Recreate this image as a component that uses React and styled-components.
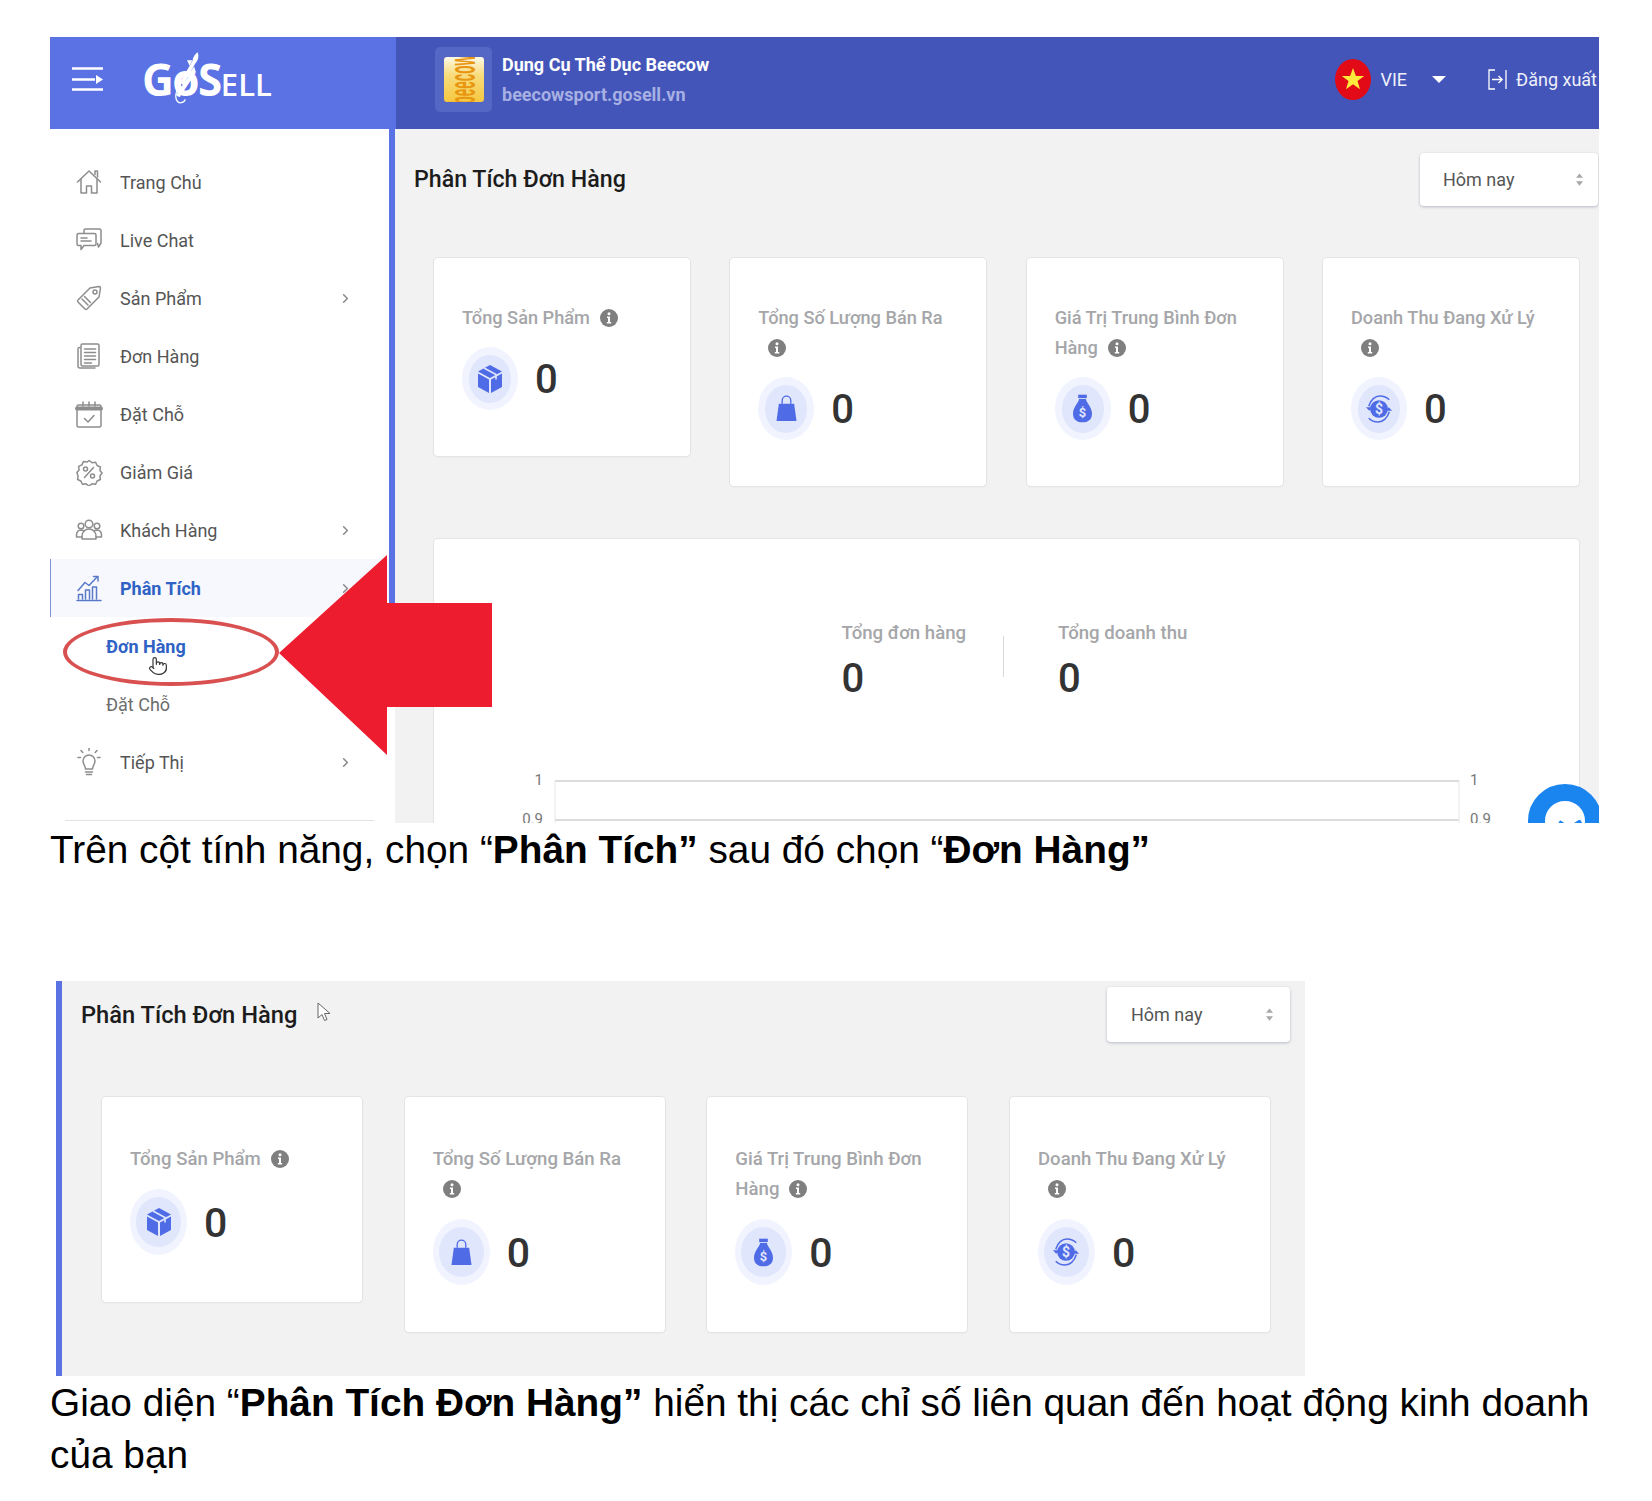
import React from "react";
import styled, { createGlobalStyle } from "styled-components";
import { ChevronRight, Pointer } from "lucide-react";

const Global = createGlobalStyle`
  html, body { margin: 0; padding: 0; background: #fff; }
  body { font-family: Roboto, "Noto Sans", sans-serif; }
`;

const Page = styled.div`
  width: 1549px;
  padding: 37px 0 0 50px;
`;

const ShotOne = styled.section`
  position: relative;
  width: 1549px;
  height: 786px;
  overflow: hidden;
`;

const Header = styled.header`
  display: flex;
  height: 92px;
  background: #4355b9;
  color: #fff;
`;

const Brand = styled.div`
  width: 346px;
  display: flex;
  align-items: center;
  gap: 39px;
  padding: 0 0 8px 22px;
  box-sizing: border-box;
  background: #5a72e4;
`;

const BrandName = styled.div`
  position: relative;
  font-family: "Open Sans", Roboto, sans-serif;
  font-weight: 700;
  font-size: 44px;
  line-height: 1;
  letter-spacing: -1.5px;
  display: flex;
  align-items: baseline;
`;

const BrandSmall = styled.span`
  font-size: 31px;
  font-weight: 600;
  letter-spacing: 0;
`;

const Rocket = styled.svg`
  position: absolute;
  left: 29px;
  top: -6px;
`;

const Shop = styled.div`
  display: flex;
  align-items: center;
  gap: 10px;
  margin-left: 39px;
  padding-bottom: 7px;
`;

const ShopThumb = styled.div`
  width: 57px;
  height: 65px;
  border-radius: 5px;
  background: #5567c5;
  display: flex;
  align-items: center;
  justify-content: center;
`;

const ShopLogo = styled.div`
  width: 40px;
  height: 45px;
  border-radius: 3px;
  overflow: hidden;
  display: flex;
  align-items: center;
  justify-content: center;
  background: linear-gradient(180deg, #fdf9e6 0%, #f8dc7c 40%, #f6c740 100%);
`;

const ShopLogoText = styled.span`
  color: #e8960f;
  font-family: "Liberation Sans", sans-serif;
  font-weight: 700;
  font-size: 13.5px;
  line-height: 16px;
  writing-mode: vertical-rl;
  transform: rotate(180deg) scaleX(2.7);
  white-space: nowrap;
`;

const ShopText = styled.div`
  display: flex;
  flex-direction: column;
  gap: 8px;
`;

const ShopName = styled.div`
  font-size: 18px;
  font-weight: 700;
  line-height: 22px;
`;

const ShopUrl = styled.div`
  font-size: 18px;
  font-weight: 700;
  line-height: 22px;
  color: #a7b0e3;
`;

const HeaderRight = styled.div`
  margin-left: auto;
  display: flex;
  align-items: center;
  font-size: 18px;
  color: #eef0fb;
  white-space: nowrap;
  padding: 0 2px 8px 0;
`;

const Flag = styled.svg`
  margin-right: 9px;
`;

const Caret = styled.span`
  width: 0;
  height: 0;
  margin: 0 42px 0 25px;
  border-left: 7px solid transparent;
  border-right: 7px solid transparent;
  border-top: 7px solid #fff;
`;

const LogoutIcon = styled.svg`
  margin-right: 9px;
`;

const Body = styled.div`
  display: flex;
  height: 694px;
`;

const Sidebar = styled.nav`
  position: relative;
  width: 345px;
  box-sizing: border-box;
  flex: none;
  padding: 24px 6px 0 0;
  background: #fff;

  &::after {
    content: "";
    position: absolute;
    top: 0;
    right: 0;
    width: 6px;
    height: 530px;
    background: #5a72e4;
  }
`;

const NavRow = styled.div`
  height: 58px;
  display: flex;
  align-items: center;
  gap: 17px;
  box-sizing: border-box;
  padding: 0 36px 0 25px;
  font-size: 18px;
  color: ${(p) => (p.$active ? "#2f62c4" : "#555")};
  font-weight: ${(p) => (p.$active ? 700 : 400)};
  background: ${(p) => (p.$active ? "#f6f8fd" : "transparent")};
  box-shadow: ${(p) => (p.$active ? "inset 1px 0 0 #7d93d8" : "none")};
`;

const NavIcon = styled.svg`
  flex: none;
  color: ${(p) => (p.$active ? "#5a78c8" : "#8d8d8d")};
`;

const NavChevron = styled(ChevronRight)`
  margin-left: auto;
  color: #8a8a8a;
`;

const SubRow = styled.div`
  height: 58px;
  display: flex;
  align-items: center;
  padding-left: 56px;
  font-size: 18px;
  color: ${(p) => (p.$active ? "#2f62c4" : "#6d6d6d")};
  font-weight: ${(p) => (p.$active ? 700 : 400)};
`;

const NavDivider = styled.div`
  height: 1px;
  margin: 29px 15px 0 15px;
  background: #e2e2e2;
`;

const Content = styled.main`
  flex: 1;
  min-width: 0;
  box-sizing: border-box;
  padding: 24px 1px 0 19px;
  background: #f2f2f2;
`;

const TitleRow = styled.div`
  display: flex;
  align-items: center;
  justify-content: space-between;
  height: ${(p) => (p.$large ? "55px" : "53px")};
`;

const PageTitle = styled.h2`
  margin: 0;
  padding-bottom: ${(p) => (p.$large ? "0" : "2px")};
  font-size: ${(p) => (p.$large ? "23.7px" : "23.2px")};
  font-weight: 500;
  color: #1c1c1c;
  display: flex;
  align-items: center;
`;

const Select = styled.div`
  width: ${(p) => (p.$large ? "183px" : "178px")};
  height: ${(p) => (p.$large ? "55px" : "53px")};
  box-sizing: border-box;
  padding: 0 ${(p) => (p.$large ? "17px" : "15px")} 0 ${(p) => (p.$large ? "24px" : "23px")};
  display: flex;
  align-items: center;
  justify-content: space-between;
  background: #fff;
  border-radius: 4px;
  box-shadow: 0 1px 3px rgba(70, 80, 120, 0.35);
  font-size: 18px;
  color: #555;
`;

const Cards = styled.div`
  display: grid;
  grid-template-columns: repeat(4, ${(p) => (p.$large ? "260px" : "256px")});
  justify-content: space-between;
  align-items: start;
  margin-top: ${(p) => (p.$large ? "55px" : "52px")};
  padding: ${(p) => (p.$large ? "0 20px 0 21px" : "0 19px 0 20px")};
`;

const Card = styled.article`
  box-sizing: border-box;
  padding: ${(p) => (p.$large ? "47px 28px" : "45px 28px 46px")};
  background: #fff;
  border-radius: 4px;
  box-shadow: 0 0 0 1px #e4e4e4, 0 1px 2px rgba(0, 0, 0, 0.08);
`;

const CardTitle = styled.div`
  font-size: ${(p) => (p.$large ? "18.6px" : "18.2px")};
  font-weight: 500;
  line-height: 30px;
  color: #a5a6a9;
`;

const InfoIcon = styled.svg`
  display: inline-block;
  vertical-align: -3px;
  margin-left: 10px;
`;

const CardValue = styled.div`
  display: flex;
  align-items: center;
  gap: 17px;
  margin-top: ${(p) => (p.$large ? "15px" : "14px")};
`;

const Halo = styled.div`
  width: ${(p) => (p.$large ? "57px" : "56px")};
  height: ${(p) => (p.$large ? "66px" : "63px")};
  border-radius: 50%;
  background: #f1f4fe;
  display: flex;
  align-items: center;
  justify-content: center;
`;

const HaloInner = styled.div`
  width: ${(p) => (p.$large ? "45px" : "42px")};
  height: ${(p) => (p.$large ? "50px" : "48px")};
  border-radius: 50%;
  background: #e0e6fb;
  display: flex;
  align-items: center;
  justify-content: center;
`;

const Num = styled.div`
  font-size: ${(p) => (p.$large ? "41px" : "40px")};
  font-weight: 500;
  line-height: 1;
  color: #333;
  padding-top: 3px;
`;

const ChartCard = styled.article`
  margin: 53px 19px 0 20px;
  height: 400px;
  box-sizing: border-box;
  padding-top: 79px;
  background: #fff;
  border-radius: 4px;
  box-shadow: 0 0 0 1px #e4e4e4, 0 1px 2px rgba(0, 0, 0, 0.08);
`;

const Summary = styled.div`
  display: flex;
  justify-content: center;
  padding-left: 16px;
`;

const SummaryCell = styled.div`
  display: flex;
  flex-direction: column;
  gap: 8px;
  padding: ${(p) => (p.$first ? "0 37px 0 0" : "0 0 0 54px")};
`;

const SummaryLabel = styled.div`
  font-size: 18.6px;
  font-weight: 500;
  line-height: 30px;
  color: #a5a6a9;
`;

const SummaryRule = styled.div`
  width: 1px;
  height: 41px;
  margin-top: 18px;
  background: #d8d8d8;
`;

const ChartSvg = styled.svg`
  display: block;
  margin-top: 72px;
`;

const Arrow = styled.svg`
  position: absolute;
  left: 229px;
  top: 518px;
`;

const Ring = styled.div`
  position: absolute;
  left: 13px;
  top: 581px;
  width: 216px;
  height: 68px;
  box-sizing: border-box;
  border: 4px solid #d95050;
  border-radius: 50%;
`;

const Hand = styled(Pointer)`
  position: absolute;
  left: 98px;
  top: 619px;
  color: #333;
  fill: #fff;
`;

const Messenger = styled.div`
  position: absolute;
  left: 1478px;
  top: 747px;
  width: 74px;
  height: 74px;
  box-sizing: border-box;
  border: 17px solid #1a84ef;
  border-radius: 50%;
  background: #fff;
`;

const MessengerMark = styled.svg`
  position: absolute;
  left: 12px;
  top: 19px;
`;

const Caption = styled.p`
  margin: 0;
  padding-top: 1px;
  font-family: "Liberation Sans", Arial, sans-serif;
  font-size: 38.8px;
  line-height: 52px;
  color: #000;
`;

const ShotTwo = styled.section`
  width: 1249px;
  height: 395px;
  margin: 105px 0 0 6px;
  box-sizing: border-box;
  padding: 6px 15px 0 19px;
  background: #f2f2f2;
  border-left: 6px solid #5a72e4;
`;

const ArrowCursor = styled.svg`
  margin: -6px 0 0 20px;
`;

const I = {
  home: (
    <>
      <path d="M2.500 14 14 3l11.500 11" />
      <path d="M20 6.500V3h2.500v6" />
      <path d="M6 11.500V25h5.500v-7h5v7H22V11.500" />
    </>
  ),
  chat: (
    <>
      <path d="M9 7V4.500A1.500 1.500 0 0 1 10.500 3h14A1.500 1.500 0 0 1 26 4.500V17l-2.500 4-1-3.500" />
      <path d="M3.500 7.500h16A1.500 1.500 0 0 1 21 9v9a1.500 1.500 0 0 1-1.500 1.500H9L6 23.500v-4H3.500A1.500 1.500 0 0 1 2 18V9a1.500 1.500 0 0 1 1.500-1.500Z" />
      <path d="M6 12h6M6 15h10" />
    </>
  ),
  tag: (
    <>
      <path d="M3 16 15 4l9-1.500c.8 0 1.500.7 1.500 1.500L24 13 12 25a1.500 1.500 0 0 1-2 0l-7-7a1.500 1.500 0 0 1 0-2Z" />
      <circle cx="20" cy="8" r="2" />
      <path d="m7 15 6 6M9.500 12.500l6 6" />
    </>
  ),
  orders: (
    <>
      <path d="M5 5.500h-.5A1.500 1.500 0 0 0 3 7v17a2 2 0 0 0 2 2h15" />
      <rect x="6" y="2" width="18" height="22" rx="1.500" />
      <path d="M9.500 7h11M9.500 10.500h11M9.500 14h11M9.500 17.500h11M9.500 21h7" />
    </>
  ),
  calendar: (
    <>
      <rect x="2" y="5" width="24" height="22" rx="1.500" />
      <path d="M2 8.500h24" strokeWidth="4" />
      <path d="M8 2v4M14 2v4M20 2v4" />
      <path d="m9.500 18.500 3.500 3.500 6-6.500" />
    </>
  ),
  percent: (
    <>
      <path d="M14 2.500l3 2.200 3.600-.5 1.500 3.300 3.300 1.500-.5 3.600 2.200 2.400-2.200 2.900.5 3.600-3.300 1.500-1.500 3.300-3.600-.5-3 2.200-3-2.200-3.600.5-1.500-3.300-3.300-1.500.5-3.600L1.900 14.500 4.100 12l-.5-3.600 3.300-1.500 1.500-3.300 3.600.5Z" />
      <circle cx="10.500" cy="11" r="2" />
      <circle cx="17.500" cy="18" r="2" />
      <path d="m18.500 9.500-9 10" />
    </>
  ),
  users: (
    <>
      <circle cx="14" cy="8" r="3.800" />
      <circle cx="6" cy="10" r="2.800" />
      <circle cx="22" cy="10" r="2.800" />
      <path d="M7 23v-3a7 7 0 0 1 14 0v3Z" />
      <path d="M7 21H1.500v-2.500A5 5 0 0 1 6 14c1.300 0 2.300.3 3 1M21 21h5.500v-2.500A5 5 0 0 0 22 14c-1.300 0-2.300.3-3 1" />
    </>
  ),
  chart: (
    <>
      <path d="M2 26.500h24" />
      <path d="M3.500 25v-4.500h4V25M10.500 25v-9h4v9M17.500 25V13h4v12" />
      <path d="M3 16.500 10 8.500l4 3 8-8.500" />
      <path d="M18.500 2.500h4.500V7" />
    </>
  ),
  bulb: (
    <>
      <path d="M10.500 20c0-3-2.500-5-2.500-8a6 6 0 0 1 12 0c0 3-2.500 5-2.500 8Z" transform="translate(0 1)" />
      <path d="M10.500 24h7M11.500 26.500h5" />
      <path d="M14 0v2.500M6 2.500l1.800 2M22 2.500l-1.800 2M3 9.500h2.500M25 9.500h-2.500" />
    </>
  ),
};

function NavGlyph({ name, active }) {
  return (
    <NavIcon $active={active} width="28" height="28" viewBox="0 0 28 28" fill="none" stroke="currentColor" strokeWidth="1.500" strokeLinejoin="round" strokeLinecap="round">
      {I[name]}
    </NavIcon>
  );
}

function Info() {
  return (
    <InfoIcon width="18" height="18" viewBox="0 0 18 18">
      <circle cx="9" cy="9" r="9" fill="#7f7f7f" />
      <circle cx="9" cy="4.800" r="1.500" fill="#fff" />
      <path d="M7 7.500h3v5.500h1.200v1.500H6.800V13H8V9H7Z" fill="#fff" />
    </InfoIcon>
  );
}

function UpDown() {
  return (
    <svg width="7" height="13" viewBox="0 0 8 14" fill="#a8a8a8">
      <path d="M4 0 8 5H0ZM4 14 0 9h8Z" />
    </svg>
  );
}

const BLUE = "#4f6be6";

const stat = {
  box: (
    <svg width="26" height="30" viewBox="0 0 26 30">
      <path d="M13 1 25 7.500 13 14 1 7.500Z" fill={BLUE} />
      <path d="M1 9.500 12 15.500V29L1 23Z" fill={BLUE} />
      <path d="M25 9.500 14 15.500V29l11-6Z" fill={BLUE} />
      <path d="m7 4 12 6.500v5" stroke="#e0e6fb" strokeWidth="1.600" fill="none" />
    </svg>
  ),
  bag: (
    <svg width="21" height="31" viewBox="0 0 22 30">
      <path d="M6.500 10V6.500a4.500 4.500 0 0 1 9 0V10" fill="none" stroke={BLUE} strokeWidth="1.400" />
      <path d="M3 10h16l2.500 18H.5Z" fill={BLUE} />
    </svg>
  ),
  money: (
    <svg width="19" height="33" viewBox="0 0 22 34">
      <rect x="6" y="1" width="10" height="4" fill={BLUE} />
      <path d="M7 6h8c0 4 7 9 7 17 0 7-5 10-11 10S0 30 0 23C0 15 7 10 7 6Z" fill={BLUE} />
      <text x="11" y="27" textAnchor="middle" fontFamily="Roboto, sans-serif" fontSize="15" fontWeight="700" fill="#e0e6fb">$</text>
    </svg>
  ),
  cycle: (
    <svg width="28" height="34" viewBox="0 0 30 34">
      <circle cx="15" cy="17" r="9.500" fill={BLUE} />
      <text x="15" y="22.500" textAnchor="middle" fontFamily="Roboto, sans-serif" fontSize="15" fontWeight="700" fill="#e0e6fb">$</text>
      <path d="M4 14C6 7 11 3 16 3s8 2 10 4M26 20c-2 7-7 11-12 11s-8-2-10-4" fill="none" stroke={BLUE} strokeWidth="1.600" />
      <path d="M1 15h7l-3.500 4ZM22 19h7l-3.500-4Z" fill={BLUE} />
    </svg>
  ),
};

const cardData = [
  { title: "Tổng Sản Phẩm", icon: "box" },
  { title: "Tổng Số Lượng Bán Ra", icon: "bag" },
  { title: "Giá Trị Trung Bình Đơn Hàng", icon: "money" },
  { title: "Doanh Thu Đang Xử Lý", icon: "cycle" },
];

function StatCards({ large }) {
  return (
    <Cards $large={large}>
      {cardData.map((c) => (
        <Card key={c.title} $large={large}>
          <CardTitle $large={large}>
            {c.title}
            <wbr />
            <Info />
          </CardTitle>
          <CardValue $large={large}>
            <Halo $large={large}>
              <HaloInner $large={large}>{stat[c.icon]}</HaloInner>
            </Halo>
            <Num $large={large}>0</Num>
          </CardValue>
        </Card>
      ))}
    </Cards>
  );
}

function Chart() {
  const text = { fontFamily: "Roboto, sans-serif", fontSize: 15, fill: "#777" };
  return (
    <ChartSvg width="1146" height="70" viewBox="0 0 1146 70">
      <path d="M121 10h904M121 49h904" stroke="#dcdcdc" strokeWidth="2" fill="none" />
      <path d="M121 10v60M1025 10v60" stroke="#e6e6e6" strokeWidth="1" fill="none" />
      <text x="109" y="14" textAnchor="end" {...text}>1</text>
      <text x="109" y="53" textAnchor="end" {...text}>0.9</text>
      <text x="1036" y="14" {...text}>1</text>
      <text x="1036" y="53" {...text}>0.9</text>
    </ChartSvg>
  );
}

export default function App() {
  return (
    <Page>
      <Global />
      <ShotOne>
        <Header>
          <Brand>
            <svg width="31" height="24" viewBox="0 0 31 24">
              <path d="M0 1.500h31M0 12.500h23M0 22.500h31" stroke="#fff" strokeWidth="2.400" />
              <path d="M24 8v9l7-4.500Z" fill="#fff" />
            </svg>
            <BrandName>
              GøS<BrandSmall>ELL</BrandSmall>
              <Rocket width="32" height="56" viewBox="0 0 36 62" fill="none">
                <path d="M30 1c2 5 0 10-3 13L14 38l-4-3L24 11c1-5 3-8 6-10Z" fill="#fff" />
                <path d="M18 10l6 0-3 6ZM26 17l2 6-6 0Z" fill="#fff" />
                <path d="M11 36C7 43 3 50 7 56c2 3 8 2 9-2" stroke="#fff" strokeWidth="1.500" />
              </Rocket>
            </BrandName>
          </Brand>
          <Shop>
            <ShopThumb>
              <ShopLogo>
                <ShopLogoText>beecow</ShopLogoText>
              </ShopLogo>
            </ShopThumb>
            <ShopText>
              <ShopName>Dụng Cụ Thể Dục Beecow</ShopName>
              <ShopUrl>beecowsport.gosell.vn</ShopUrl>
            </ShopText>
          </Shop>
          <HeaderRight>
            <Flag width="36" height="41" viewBox="0 0 36 41">
              <ellipse cx="18" cy="20.500" rx="18" ry="20.500" fill="#e30a17" />
              <path d="m18 9 2.900 8.100h8.300l-6.700 5 2.500 8.200-7-5-7 5 2.500-8.200-6.700-5h8.300Z" fill="#fdea3c" />
            </Flag>
            VIE
            <Caret />
            <LogoutIcon width="19" height="21" viewBox="0 0 19 21" fill="none" stroke="#fff" strokeWidth="1.300">
              <path d="M7 1H1v19h6M4 10.500h10M10.500 7l3.700 3.500-3.700 3.500M18 1v19" />
            </LogoutIcon>
            Đăng xuất
          </HeaderRight>
        </Header>
        <Body>
          <Sidebar>
            <NavRow><NavGlyph name="home" />Trang Chủ</NavRow>
            <NavRow><NavGlyph name="chat" />Live Chat</NavRow>
            <NavRow><NavGlyph name="tag" />Sản Phẩm<NavChevron size={15} strokeWidth={2.5} /></NavRow>
            <NavRow><NavGlyph name="orders" />Đơn Hàng</NavRow>
            <NavRow><NavGlyph name="calendar" />Đặt Chỗ</NavRow>
            <NavRow><NavGlyph name="percent" />Giảm Giá</NavRow>
            <NavRow><NavGlyph name="users" />Khách Hàng<NavChevron size={15} strokeWidth={2.5} /></NavRow>
            <NavRow $active><NavGlyph name="chart" active />Phân Tích<NavChevron size={15} strokeWidth={2.5} /></NavRow>
            <SubRow $active>Đơn Hàng</SubRow>
            <SubRow>Đặt Chỗ</SubRow>
            <NavRow><NavGlyph name="bulb" />Tiếp Thị<NavChevron size={15} strokeWidth={2.5} /></NavRow>
            <NavDivider />
          </Sidebar>
          <Content>
            <TitleRow>
              <PageTitle>Phân Tích Đơn Hàng</PageTitle>
              <Select>Hôm nay<UpDown /></Select>
            </TitleRow>
            <StatCards />
            <ChartCard>
              <Summary>
                <SummaryCell $first>
                  <SummaryLabel>Tổng đơn hàng</SummaryLabel>
                  <Num>0</Num>
                </SummaryCell>
                <SummaryRule />
                <SummaryCell>
                  <SummaryLabel>Tổng doanh thu</SummaryLabel>
                  <Num>0</Num>
                </SummaryCell>
              </Summary>
              <Chart />
            </ChartCard>
          </Content>
        </Body>
        <Ring />
        <Hand size={20} strokeWidth={1.4} />
        <Arrow width="213" height="200" viewBox="0 0 213 200">
          <path d="M0 98 108 0v48h105v104H108v48Z" fill="#ed1c2e" />
        </Arrow>
        <Messenger>
          <MessengerMark width="26" height="10" viewBox="0 0 26 10">
            <path d="M2 2l8 5 6-1 8-5" stroke="#1a84ef" strokeWidth="4" fill="none" />
          </MessengerMark>
        </Messenger>
      </ShotOne>
      <Caption>
        Trên cột tính năng, chọn “<b>Phân Tích”</b> sau đó chọn “<b>Đơn Hàng”</b>
      </Caption>
      <ShotTwo>
        <TitleRow $large>
          <PageTitle $large>
            Phân Tích Đơn Hàng
            <ArrowCursor width="14" height="20" viewBox="0 0 14 20">
              <path d="M1 1v15l4-3.500 2.500 6 2.500-1-2.500-6H13Z" fill="#fff" stroke="#666" strokeWidth="1" strokeLinejoin="round" />
            </ArrowCursor>
          </PageTitle>
          <Select $large>Hôm nay<UpDown /></Select>
        </TitleRow>
        <StatCards large />
      </ShotTwo>
      <Caption>
        Giao diện “<b>Phân Tích Đơn Hàng”</b> hiển thị các chỉ số liên quan đến hoạt động kinh doanh của bạn
      </Caption>
    </Page>
  );
}
